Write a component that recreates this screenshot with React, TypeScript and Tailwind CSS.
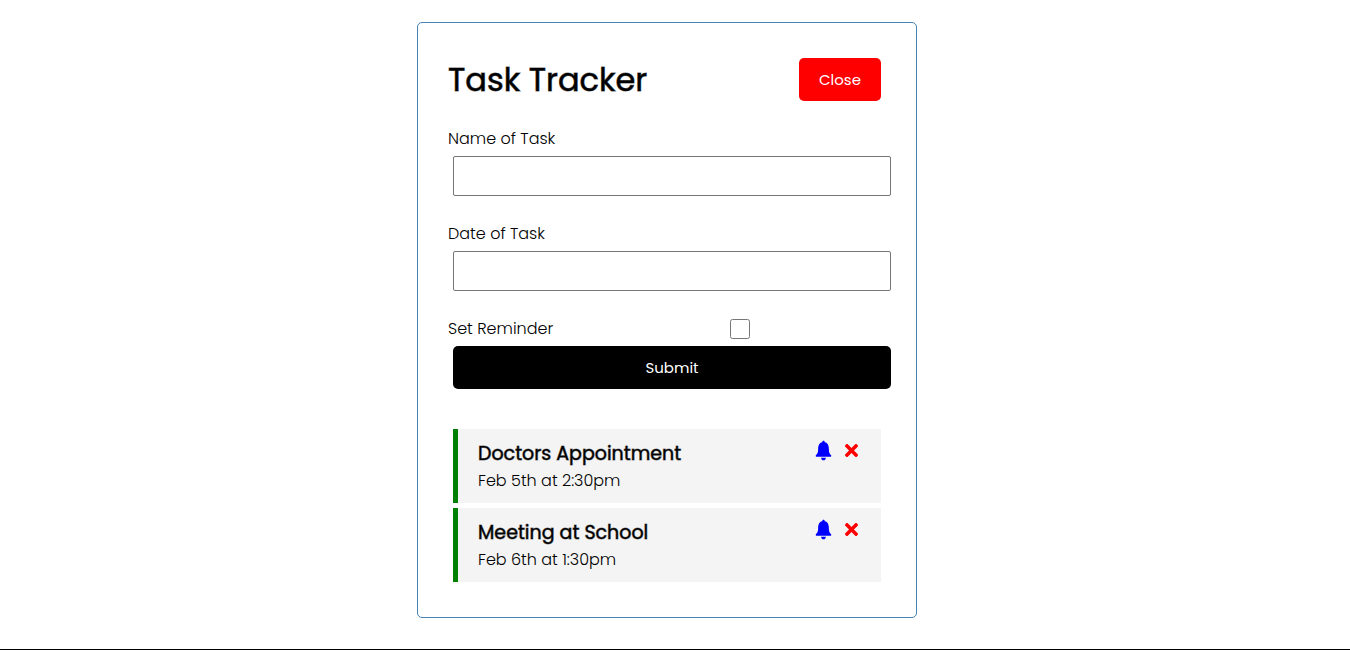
import { FaTimes } from "react-icons/fa";
import { IoIosNotifications } from "react-icons/io";

const tasks = [
  { id: 1, text: "Doctors Appointment", day: "Feb 5th at 2:30pm" },
  { id: 2, text: "Meeting at School", day: "Feb 6th at 1:30pm" },
];

function TextField({ id, label }: { id: string; label: string }) {
  return (
    <div className="mb-[26px]">
      <label htmlFor={id} className="block">
        {label}
      </label>
      <div className="-mr-[5px] mt-[5px] pl-[5px]">
        <input
          id={id}
          type="text"
          className="block h-10 w-full rounded-[2px] border border-[#767676] bg-white px-2"
        />
      </div>
    </div>
  );
}

function Task({ text, day }: { text: string; day: string }) {
  return (
    <li className="flex items-start justify-between border-l-[5px] border-[green] bg-[#f4f4f4] px-5 pt-[9px] pb-[11px]">
      <div>
        <h3 className="text-[19px] leading-[31px] font-normal [-webkit-text-stroke:1px_rgb(0_0_0/50%)]">{text}</h3>
        <p className="leading-[23px]">{day}</p>
      </div>
      <div className="flex items-center gap-[6px]">
        <button type="button" aria-label={`Toggle reminder for ${text}`} className="text-[blue]">
          <IoIosNotifications size={25} />
        </button>
        <button type="button" aria-label={`Delete ${text}`} className="text-[red]">
          <FaTimes size={19} />
        </button>
      </div>
    </li>
  );
}

export default function App() {
  return (
    <div className="flex min-h-screen flex-col border-b border-black bg-white pr-4 font-['Poppins','Inter',sans-serif] text-[16px] leading-6 font-light text-black">
      <main className="mx-auto mt-[22px] mb-[30px] w-full max-w-[500px] rounded-[5px] border border-[steelblue] p-[30px]">
        <header className="mb-[21px] flex items-center justify-between">
          <h1 className="text-[32px] leading-[48px] font-normal [-webkit-text-stroke:1px_rgb(0_0_0/60%)]">Task Tracker</h1>
          <button
            type="button"
            className="m-[5px] h-[43px] rounded-[5px] bg-[red] px-5 text-[15px] font-normal text-white"
          >
            Close
          </button>
        </header>
        <form onSubmit={(e) => e.preventDefault()}>
          <TextField id="name" label="Name of Task" />
          <TextField id="date" label="Date of Task" />
          <div className="flex items-center">
            <label htmlFor="reminder" className="flex-1">
              Set Reminder
            </label>
            <div className="flex flex-2 justify-center">
              <input id="reminder" type="checkbox" className="h-5 w-5" />
            </div>
          </div>
          <div className="-mr-[5px] mt-[5px] pl-[5px]">
            <button
              type="submit"
              className="block h-[43px] w-full rounded-[5px] bg-black text-[15px] font-normal text-white"
            >
              Submit
            </button>
          </div>
        </form>
        <ul className="mx-[5px] mt-10 mb-[5px] flex flex-col gap-[5px]">
          {tasks.map((task) => (
            <Task key={task.id} text={task.text} day={task.day} />
          ))}
        </ul>
      </main>
    </div>
  );
}
